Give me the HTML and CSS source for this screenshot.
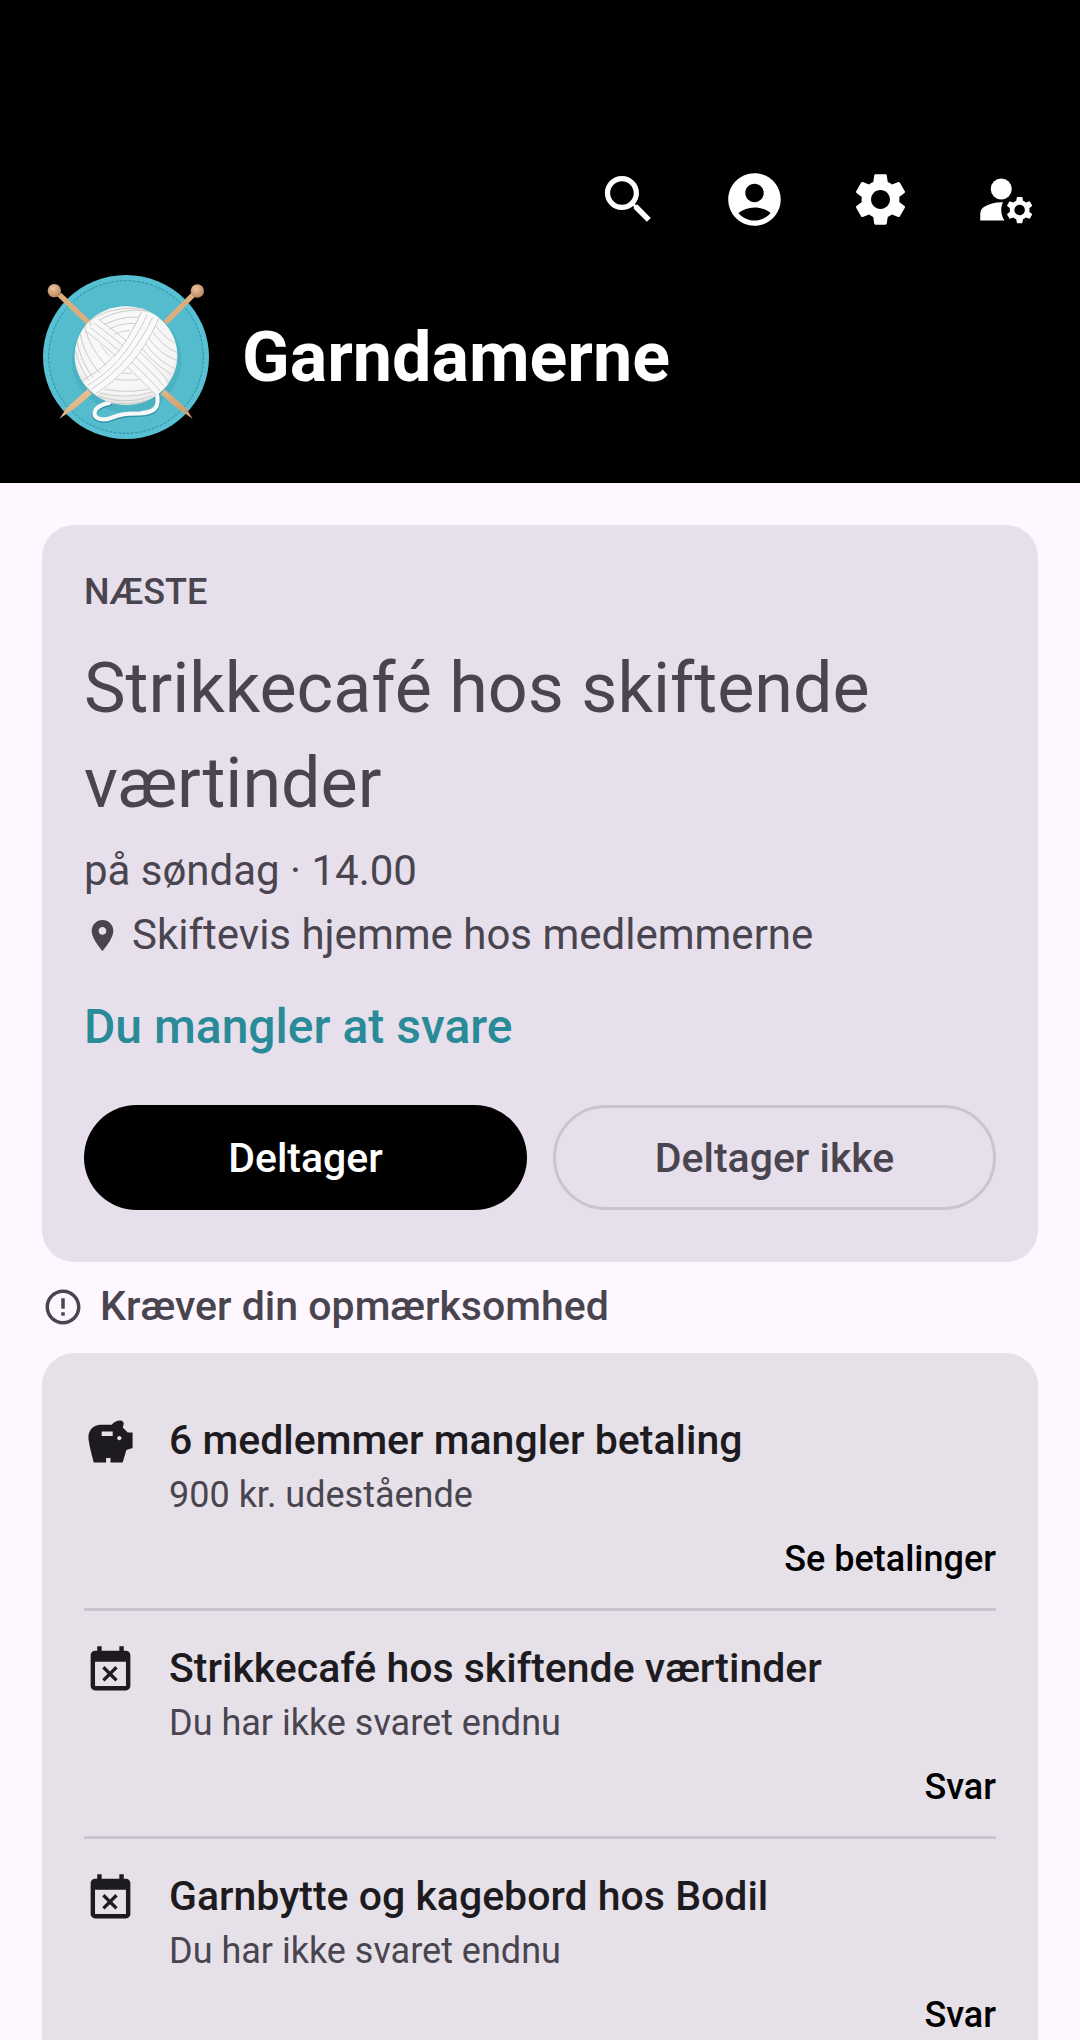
FILE: index.html
```
<!DOCTYPE html>
<html lang="da">
<head>
    <meta charset="UTF-8">
    <meta name="viewport" content="width=device-width, initial-scale=1.0">
    <title>Garndamerne</title>
    <link rel="stylesheet" href="styles.css">
</head>
<body>
    <header class="header">
        <nav class="toolbar">
            <button class="icon-button" aria-label="Søg">
                <svg class="icon" viewBox="0 0 24 24"><path d="M15.5 14h-.79l-.28-.27C15.41 12.59 16 11.11 16 9.5 16 5.91 13.09 3 9.5 3S3 5.91 3 9.5 5.91 16 9.5 16c1.61 0 3.09-.59 4.23-1.57l.27.28v.79l5 4.99L20.49 19l-4.99-5zm-6 0C7.01 14 5 11.99 5 9.5S7.01 5 9.5 5 14 7.01 14 9.5 11.99 14 9.5 14z"/></svg>
            </button>
            <button class="icon-button" aria-label="Profil">
                <svg class="icon" viewBox="0 0 24 24"><path d="M12 2C6.48 2 2 6.48 2 12s4.48 10 10 10 10-4.48 10-10S17.52 2 12 2zM12 6c1.93 0 3.5 1.57 3.5 3.5S13.93 13 12 13s-3.5-1.57-3.5-3.5S10.07 6 12 6zm0 14c-2.03 0-4.43-.82-6.14-2.88C7.55 15.8 9.68 15 12 15s4.45.8 6.14 2.12C16.43 19.18 14.03 20 12 20z"/></svg>
            </button>
            <button class="icon-button" aria-label="Indstillinger">
                <svg class="icon" viewBox="0 0 24 24"><path d="M19.14 12.94c.04-.3.06-.61.06-.94 0-.32-.02-.64-.07-.94l2.03-1.58c.18-.14.23-.41.12-.61l-1.92-3.32c-.12-.22-.37-.29-.59-.22l-2.39.96c-.5-.38-1.03-.7-1.62-.94l-.36-2.54c-.04-.24-.24-.41-.48-.41h-3.84c-.24 0-.43.17-.47.41l-.36 2.54c-.59.24-1.13.57-1.62.94l-2.39-.96c-.22-.08-.47 0-.59.22L2.74 8.87c-.12.21-.08.47.12.61l2.03 1.58c-.05.3-.09.63-.09.94s.02.64.07.94l-2.03 1.58c-.18.14-.23.41-.12.61l1.92 3.32c.12.22.37.29.59.22l2.39-.96c.5.38 1.03.7 1.62.94l.36 2.54c.05.24.24.41.48.41h3.84c.24 0 .44-.17.47-.41l.36-2.54c.59-.24 1.13-.56 1.62-.94l2.39.96c.22.08.47 0 .59-.22l1.92-3.32c.12-.22.07-.47-.12-.61l-2.01-1.58zM12 15.6c-1.98 0-3.6-1.62-3.6-3.6s1.62-3.6 3.6-3.6 3.6 1.62 3.6 3.6-1.62 3.6-3.6 3.6z"/></svg>
            </button>
            <button class="icon-button" aria-label="Administrer medlemmer">
                <svg class="icon" viewBox="0 0 24 24"><circle cx="10" cy="8" r="4"/><path d="M10.67 13.02C10.45 13.01 10.23 13 10 13c-2.42 0-4.68.67-6.61 1.82-.88.52-1.39 1.5-1.39 2.53V20h9.26c-.79-1.13-1.26-2.51-1.26-4 0-1.07.25-2.07.67-2.98zM20.75 16c0-.22-.03-.42-.06-.63l1.14-1.01-1-1.73-1.45.49c-.32-.27-.68-.48-1.08-.63L18 11h-2l-.3 1.49c-.4.15-.76.36-1.08.63l-1.45-.49-1 1.73 1.14 1.01c-.03.21-.06.41-.06.63s.03.42.06.63l-1.14 1.01 1 1.73 1.45-.49c.32.27.68.48 1.08.63L16 21h2l.3-1.49c.4-.15.76-.36 1.08-.63l1.45.49 1-1.73-1.14-1.01c.03-.21.06-.41.06-.63zM17 18c-1.1 0-2-.9-2-2s.9-2 2-2 2 .9 2 2-.9 2-2 2z"/></svg>
            </button>
        </nav>
        <div class="brand">
            <!-- Yarn ball on a round teal patch with two needles -->
            <svg class="logo" viewBox="36 39 504 504" aria-hidden="true">
                <defs>
                    <linearGradient id="wood" x1="0" y1="0" x2="1" y2="1">
                        <stop offset="0" stop-color="#f0c597"/>
                        <stop offset="1" stop-color="#c99a68"/>
                    </linearGradient>
                    <radialGradient id="knob" cx=".4" cy=".35" r=".7">
                        <stop offset="0" stop-color="#edc6a0"/>
                        <stop offset="1" stop-color="#b98259"/>
                    </radialGradient>
                    <radialGradient id="wool" cx=".5" cy=".42" r=".6">
                        <stop offset="0" stop-color="#fdfdfd"/>
                        <stop offset=".8" stop-color="#f6f5f5"/>
                        <stop offset="1" stop-color="#dfdddd"/>
                    </radialGradient>
                    <clipPath id="ball"><ellipse cx="288" cy="287" rx="154" ry="148"/></clipPath>
                </defs>
                <ellipse cx="288" cy="291" rx="249" ry="246" fill="#57c1d3"/>
                <ellipse cx="288" cy="291" rx="232" ry="229" fill="#54bccd" stroke="#2f8fa3" stroke-width="3" stroke-dasharray="9 4"/>
                <ellipse cx="290" cy="300" rx="164" ry="158" fill="#3fa3b6" opacity=".4"/>
                <path d="M172 388l14 14-50 42-48 32 22-32zM404 388l-12 14 48 42 48 32-20-32z" fill="url(#wood)"/>
                <path d="M88 104l94 90M490 104l-84 84" stroke="#dcae7e" stroke-width="16"/>
                <circle cx="73" cy="92" r="20" fill="url(#knob)"/>
                <circle cx="502" cy="93" r="20" fill="url(#knob)"/>
                <path d="M380 400c10 44-6 60-50 62-46 0-62 4-88 14-28 10-52 0-48-18 4-14 18-22 44-28" fill="none" stroke="#2f8fa3" stroke-width="17" stroke-linecap="round"/>
                <path d="M380 398c10 44-6 60-50 62-46 0-62 4-88 14-28 10-52 0-48-18 4-14 18-22 44-28" fill="none" stroke="#f6f8f8" stroke-width="13" stroke-linecap="round"/>
                <ellipse cx="288" cy="287" rx="154" ry="148" fill="url(#wool)"/>
                <g clip-path="url(#ball)" fill="none" stroke="#cdcaca" stroke-width="3">
                    <!-- left and right windings -->
                    <path d="M136 270c10 40 24 70 50 104M140 240c10 50 28 88 58 124M150 215c8 54 32 94 62 128M164 198c10 50 34 84 64 118M178 184c14 42 34 76 62 106"/>
                    <path d="M350 190c26 40 50 70 92 88M366 182c20 30 40 52 72 68M340 208c24 44 54 76 102 94M330 226c26 44 58 78 104 100M322 244c24 38 56 72 102 98"/>
                    <!-- top windings -->
                    <path d="M186 196c40-34 120-60 190-36M198 210c46-34 100-46 156-34M214 222c34-24 70-36 112-30M180 182c50-36 120-44 170-32M230 236c24-16 46-24 70-24"/>
                    <!-- bottom windings -->
                    <path d="M170 372c70 26 160 34 242-4M182 390c70 24 140 26 210-4M204 408c50 18 110 20 160 0M226 352c40 12 100 12 148-4M246 334c28 8 60 8 96 0M220 424c40 10 90 10 130-2"/>
                    <!-- band from the upper left down to the right -->
                    <path d="M168 214l36-36 210 196-34 34z" fill="#f9f8f8" stroke="none"/>
                    <path d="M168 214c70 52 140 120 212 194M182 204c70 52 140 114 210 190M194 190c70 52 140 112 208 188M206 178c70 52 140 106 208 184" />
                    <!-- band from the lower left up to the right -->
                    <path d="M160 370c80-40 130-110 174-214l54 14c-40 96-100 170-188 236z" fill="#fbfafa" stroke="none"/>
                    <path d="M158 360c80-44 132-104 176-204M172 376c84-50 132-114 180-212M184 388c84-56 138-120 184-216M196 402c90-60 152-134 192-232"/>
                </g>
            </svg>
            <h1 class="brand-name">Garndamerne</h1>
        </div>
    </header>

    <main class="content">
        <section class="next-card">
            <p class="eyebrow">NÆSTE</p>
            <h2 class="event-title">Strikkecafé hos skiftende værtinder</h2>
            <p class="event-info">på søndag · 14.00</p>
            <p class="event-info">
                <svg class="pin" viewBox="0 0 24 24" aria-hidden="true"><path d="M12 2C8.13 2 5 5.13 5 9c0 5.25 7 13 7 13s7-7.75 7-13c0-3.87-3.13-7-7-7zm0 9.5c-1.38 0-2.5-1.12-2.5-2.5s1.12-2.5 2.5-2.5 2.5 1.12 2.5 2.5-1.12 2.5-2.5 2.5z"/></svg>
                Skiftevis hjemme hos medlemmerne
            </p>
            <p class="status">Du mangler at svare</p>
            <div class="answers">
                <button class="answer answer-yes">Deltager</button>
                <button class="answer answer-no">Deltager ikke</button>
            </div>
        </section>

        <h2 class="section-title">
            <svg class="alert" viewBox="0 0 24 24" aria-hidden="true"><path d="M11 15h2v2h-2v-2zm0-8h2v6h-2V7zm.99-5C6.47 2 2 6.48 2 12s4.47 10 9.99 10C17.52 22 22 17.52 22 12S17.52 2 11.99 2zM12 20c-4.42 0-8-3.58-8-8s3.58-8 8-8 8 3.58 8 8-3.58 8-8 8z"/></svg>
            Kræver din opmærksomhed
        </h2>

        <ul class="task-list">
            <li class="task">
                <svg class="task-icon" viewBox="0 0 24 24" aria-hidden="true"><path d="M19.83 7.5l-2.27-2.27c.07-.42.18-.81.32-1.15.08-.18.12-.37.12-.58 0-.83-.67-1.5-1.5-1.5-1.64 0-3.09.79-4 2h-5C4.46 4 2 6.46 2 9.5S4.5 21 4.5 21H10v-2h2v2h5.5l1.68-5.59 2.82-.94V7.5h-2.17zM13 9H8V7h5v2zm3 2c-.55 0-1-.45-1-1s.45-1 1-1 1 .45 1 1-.45 1-1 1z"/></svg>
                <div class="task-body">
                    <h3 class="task-title">6 medlemmer mangler betaling</h3>
                    <p class="task-text">900 kr. udestående</p>
                    <button class="task-action">Se betalinger</button>
                </div>
            </li>
            <li class="task">
                <svg class="task-icon" viewBox="0 0 24 24" aria-hidden="true"><path d="M9.31 17l2.44-2.44L14.19 17l1.06-1.06-2.44-2.44 2.44-2.44L14.19 10l-2.44 2.44L9.31 10l-1.06 1.06 2.44 2.44-2.44 2.44L9.31 17zM19 3h-1V1h-2v2H8V1H6v2H5c-1.11 0-1.99.9-1.99 2L3 19c0 1.1.89 2 2 2h14c1.1 0 2-.9 2-2V5c0-1.1-.9-2-2-2zm0 16H5V8h14v11z"/></svg>
                <div class="task-body">
                    <h3 class="task-title">Strikkecafé hos skiftende værtinder</h3>
                    <p class="task-text">Du har ikke svaret endnu</p>
                    <button class="task-action">Svar</button>
                </div>
            </li>
            <li class="task">
                <svg class="task-icon" viewBox="0 0 24 24" aria-hidden="true"><path d="M9.31 17l2.44-2.44L14.19 17l1.06-1.06-2.44-2.44 2.44-2.44L14.19 10l-2.44 2.44L9.31 10l-1.06 1.06 2.44 2.44-2.44 2.44L9.31 17zM19 3h-1V1h-2v2H8V1H6v2H5c-1.11 0-1.99.9-1.99 2L3 19c0 1.1.89 2 2 2h14c1.1 0 2-.9 2-2V5c0-1.1-.9-2-2-2zm0 16H5V8h14v11z"/></svg>
                <div class="task-body">
                    <h3 class="task-title">Garnbytte og kagebord hos Bodil</h3>
                    <p class="task-text">Du har ikke svaret endnu</p>
                    <button class="task-action">Svar</button>
                </div>
            </li>
        </ul>
    </main>
</body>
</html>
```
FILE: styles.css
```
* {
    box-sizing: border-box;
    margin: 0;
    padding: 0;
}

body {
    height: 100vh;
    display: flex;
    flex-direction: column;
    font-family: Roboto, sans-serif;
    background: #fef7ff;
    color: #49454f;
}

button {
    font-family: inherit;
    border: none;
    background: none;
    cursor: pointer;
}

svg {
    display: block;
    flex-shrink: 0;
    fill: currentColor;
}

/* Header */
.header {
    flex-shrink: 0;
    padding: 136px 11px 42px;
    background: #000;
    color: #fff;
}

.toolbar {
    display: flex;
    justify-content: flex-end;
}

.icon-button {
    display: flex;
    align-items: center;
    justify-content: center;
    width: 126px;
    height: 126px;
    color: #fff;
}

.icon {
    width: 63px;
    height: 63px;
}

.brand {
    display: flex;
    align-items: center;
    gap: 32px;
    margin-top: 11px;
    padding: 0 31px;
}

.logo {
    width: 168px;
    height: 168px;
}

.brand-name {
    font-size: 70px;
    font-weight: 700;
    line-height: 95px;
}

/* Scrolling page content */
.content {
    flex: 1;
    overflow-y: auto;
    scrollbar-width: none;
    padding: 42px;
}

.next-card {
    padding: 42px 42px 52px;
    border-radius: 32px;
    background: #e7dfec;
}

.eyebrow {
    margin-bottom: 24px;
    font-size: 36px;
    font-weight: 500;
    line-height: 50px;
}

.event-title {
    margin-bottom: 8px;
    font-size: 70px;
    font-weight: 400;
    line-height: 95px;
}

.event-info {
    display: flex;
    align-items: center;
    gap: 11px;
    font-size: 42px;
    line-height: 64px;
}

.pin {
    width: 37px;
    height: 37px;
}

.status {
    margin-top: 28px;
    font-size: 48px;
    font-weight: 500;
    line-height: 63px;
    color: #298a98;
}

.answers {
    display: grid;
    grid-template-columns: 1fr 1fr;
    gap: 26px;
    margin-top: 47px;
}

.answer {
    height: 105px;
    border-radius: 53px;
    font-size: 41px;
    font-weight: 500;
}

.answer-yes {
    background: #000;
    color: #fff;
}

.answer-no {
    border: 3px solid #cac4d0;
    color: #49454f;
}

/* Tasks that need attention */
.section-title {
    display: flex;
    align-items: center;
    gap: 16px;
    margin: 13px 0 15px;
    font-size: 41px;
    font-weight: 500;
    line-height: 63px;
}

.alert {
    width: 42px;
    height: 42px;
}

.task-list {
    padding: 30px 42px;
    border-radius: 32px;
    background: #e6e0e9;
    list-style: none;
}

.task {
    display: flex;
    gap: 32px;
    padding: 27px 0 24px;
    border-bottom: 3px solid #cac4d0;
    color: #1d1b20;
}

.task:last-child {
    border-bottom: none;
}

.task-icon {
    width: 53px;
    height: 53px;
    margin-top: 6px;
}

.task-body {
    flex: 1;
    display: flex;
    flex-direction: column;
}

.task-title {
    font-size: 41px;
    font-weight: 500;
    line-height: 60px;
}

.task-text {
    font-size: 36px;
    line-height: 50px;
    color: #49454f;
}

.task-action {
    align-self: flex-end;
    margin-top: 14px;
    font-size: 36px;
    font-weight: 500;
    line-height: 50px;
    color: #000;
}
```
